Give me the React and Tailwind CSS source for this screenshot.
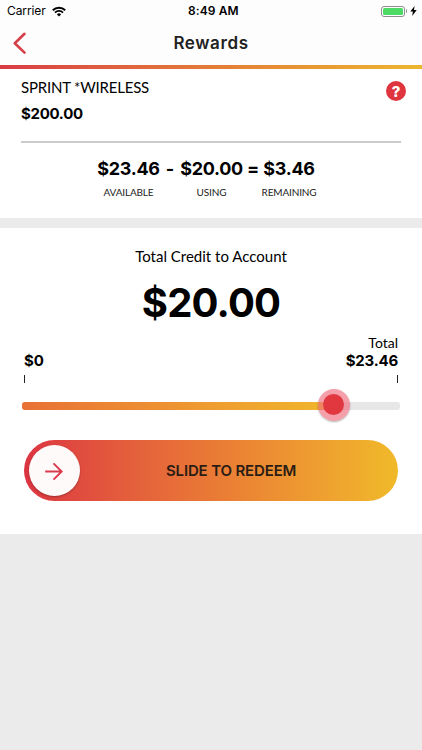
import React from "react";

const StatusBar = () => (
  <div className="relative flex h-[22px] items-center justify-between pl-[7px] pr-[5px] font-['Inter',sans-serif] text-black">
    <div className="flex items-center gap-[6px]">
      <span className="text-[12px] leading-[22px] tracking-[-0.1px]">Carrier</span>
      <svg width="14" height="11" viewBox="0 0 14 11" fill="none" stroke="currentColor">
        <path d="M0.8 4.2a8.8 8.8 0 0 1 12.4 0" strokeWidth="2" />
        <path d="M3 6.6a5.7 5.7 0 0 1 8 0" strokeWidth="1.8" />
        <path d="M7 10.6 4.9 8.4a3 3 0 0 1 4.2 0z" fill="currentColor" stroke="none" />
      </svg>
    </div>
    <span className="absolute left-[188px] text-[12px] font-semibold leading-[22px] tracking-[0.1px] whitespace-nowrap">
      8:49 AM
    </span>
    <div className="flex items-center">
      <div className="h-[11px] w-[24px] rounded-[3px] border border-[#8e8e8e] p-px">
        <div className="h-full w-full rounded-[1.5px] bg-[#4cd964]" />
      </div>
      <div className="ml-px h-1 w-[1.5px] rounded-r-full bg-[#999]" />
      <svg className="ml-[3px]" width="7" height="10" viewBox="0 0 7 10" fill="currentColor">
        <path d="M4.6 0 0.3 5.6h2.6L2.2 10l4.5-5.9H4z" />
      </svg>
    </div>
  </div>
);

const Header = () => (
  <header className="bg-[#fdfdfd]">
    <StatusBar />
    <div className="relative flex h-[43px] items-center justify-center">
      <svg
        className="absolute left-[12px] top-[10px]"
        width="15"
        height="22"
        viewBox="0 0 15 22"
        fill="none"
        stroke="#d63f47"
        strokeWidth="2.6"
        strokeLinecap="round"
        strokeLinejoin="round"
      >
        <path d="M12.5 1.8 2.8 11.3l9.7 9.3" />
      </svg>
      <h1 className="text-[17px] font-semibold tracking-[0.6px] text-[#222]">Rewards</h1>
    </div>
    <div className="h-1 bg-linear-to-r from-[#d93b45] via-[#e37b36] to-[#ecb62f]" />
  </header>
);

const amounts = [
  { value: "$23.46", label: "AVAILABLE", sign: "-", width: "w-[63px]" },
  { value: "$20.00", label: "USING", sign: "=", width: "w-[63px]" },
  { value: "$3.46", label: "REMAINING", width: "w-[52px]" },
];

const Summary = () => (
  <section className="h-[149px] bg-white pl-[21px] pt-[8px]">
    <div className="flex justify-between pr-4">
      <div>
        <p className="font-['Lato',sans-serif] text-[15px] leading-5 tracking-[-0.2px]">SPRINT *WIRELESS</p>
        <p className="mt-[7px] text-[15px] font-bold leading-5 tracking-[-0.3px]">$200.00</p>
      </div>
      <button className="mt-[4px] flex h-5 w-5 items-center justify-center rounded-full bg-[#df353f] text-[15px] font-extrabold leading-none text-white">
        ?
      </button>
    </div>
    <div className="mr-[21px] mt-[17px] h-[2px] bg-[#cbcbcb]" />
    <div className="ml-[76px] mt-[14px] flex whitespace-nowrap">
      {amounts.map(({ value, label, sign, width }) => (
        <React.Fragment key={label}>
          <div className={`flex flex-col items-center ${width}`}>
            <span className="text-[18px] font-bold leading-6 tracking-[-0.3px]">{value}</span>
            <span className="mt-[4px] font-['Lato',sans-serif] text-[10px] leading-[14px] tracking-[-0.15px] text-[#222]">
              {label}
            </span>
          </div>
          {sign && <span className="w-[20px] text-center text-[18px] font-bold leading-6">{sign}</span>}
        </React.Fragment>
      ))}
    </div>
  </section>
);

const CreditSlider = () => (
  <div className="relative mx-[22px] mt-[19px] h-[8px] rounded-[3px] bg-[#e7e7e7]">
    <div className="h-full w-[312px] rounded-l-[3px] bg-linear-to-r from-[#e87035] to-[#f0b72a]" />
    <div className="absolute left-[295.5px] top-[-13.5px] flex h-8 w-8 items-center justify-center rounded-full bg-[#ee6b7c]/65 shadow-[0_1px_2px_rgba(0,0,0,0.3)]">
      <div className="h-[21px] w-[21px] rounded-full bg-[#e13840]" />
    </div>
  </div>
);

const Redeem = () => (
  <section className="h-[306px] bg-white pt-[17px]">
    <p className="text-center font-['Lato',sans-serif] text-[15px] leading-[22px]">
      Total Credit to Account
    </p>
    <p className="mt-[12px] text-center text-[40px] font-bold leading-[48px] tracking-[-0.8px]">$20.00</p>
    <div className="mx-6 mt-[7px] flex items-end justify-between">
      <p className="text-[15px] font-bold leading-[18px]">$0</p>
      <div className="text-right">
        <p className="font-['Lato',sans-serif] text-[14px] leading-[18px]">Total</p>
        <p className="text-[15px] font-bold leading-[18px] tracking-[-0.2px]">$23.46</p>
      </div>
    </div>
    <div className="mx-6 mt-[5px] flex justify-between">
      <div className="h-2 w-px bg-[#222]" />
      <div className="h-2 w-px bg-[#222]" />
    </div>
    <CreditSlider />
    <div className="mx-6 mt-[30px] flex h-[61px] items-center rounded-full bg-linear-to-r from-[#dc3441] via-[#e97935] to-[#f0b929] pl-[5px]">
      <button className="flex h-[51px] w-[51px] shrink-0 items-center justify-center rounded-full bg-[#fffafa] shadow-[0_1px_2px_rgba(0,0,0,0.3)]">
        <svg width="20" height="20" viewBox="0 0 20 20" fill="none" stroke="#d93a4c" strokeWidth="1.9">
          <path d="M0.2 10.5h16.3M8.5 2.3l8.2 8.2-8.2 8.2" />
        </svg>
      </button>
      <span className="ml-[86px] mt-px whitespace-nowrap text-[15px] font-semibold tracking-[-0.15px] text-[#2b1c14]">
        SLIDE TO REDEEM
      </span>
    </div>
  </section>
);

const App = () => (
  <div className="flex h-[750px] w-[422px] flex-col overflow-hidden bg-[#ebebeb] font-['Inter',sans-serif] text-black">
    <Header />
    <Summary />
    <div className="h-[10px] shrink-0" />
    <Redeem />
  </div>
);

export default App;
